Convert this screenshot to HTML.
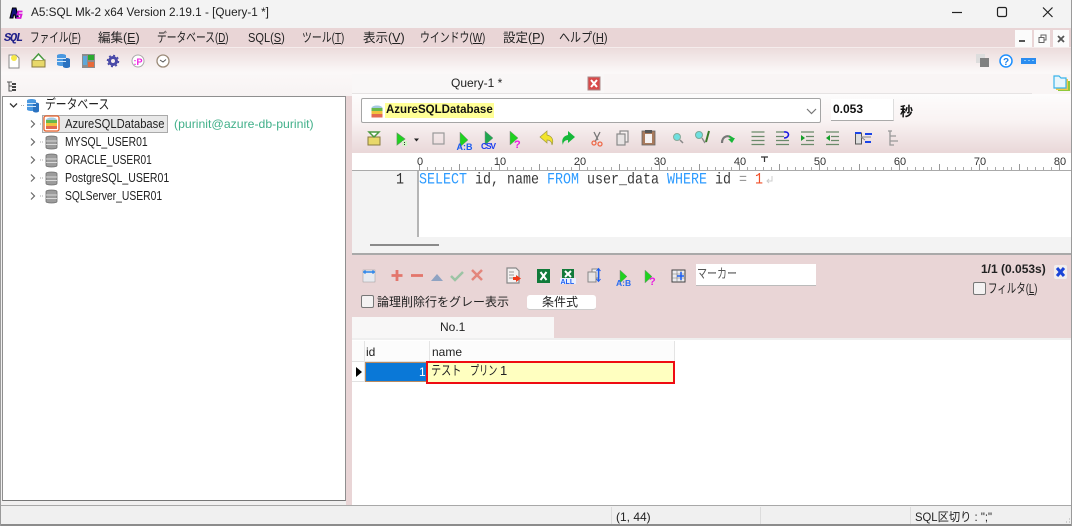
<!DOCTYPE html>
<html lang="ja"><head><meta charset="utf-8"><title>A5:SQL Mk-2</title>
<style>
html,body{margin:0;padding:0}
body{width:1072px;height:526px;overflow:hidden;position:relative;background:#fff;font:12px "Liberation Sans","Noto Sans CJK JP",sans-serif;color:#222}
#w{position:absolute;left:0;top:0;width:1072px;height:526px;overflow:hidden;filter:blur(.3px)}
.a{position:absolute;white-space:nowrap}
.t{position:absolute;white-space:nowrap;line-height:16px;height:16px;transform-origin:0 50%}
u{text-decoration:underline}
svg{position:absolute;left:0;top:0}
.m{font-family:"Liberation Mono",monospace;font-size:13.33px;line-height:18px;transform:scaleY(1.2);transform-origin:0 50%}
.r{font-size:11px;color:#333;transform:translateX(-50%)}
.cb{position:absolute;width:11px;height:11px;border:1px solid #777;border-radius:2px;background:#f4f2f2}
</style></head><body><div id="w">
<!-- backgrounds -->
<div class="a" style="left:0;top:0;width:1072px;height:28px;background:#f3f3f3"></div>
<div class="a" style="left:0;top:28px;width:1072px;height:19px;background:#e9d5d6"></div>
<div class="a" style="left:0;top:47px;width:1072px;height:1px;background:#f5ecec"></div>
<div class="a" style="left:0;top:48px;width:1072px;height:48px;background:linear-gradient(#ecdcdc,#fbf8f8 50%,#f7f3f3)"></div>
<div class="a" style="left:0;top:96px;width:352px;height:410px;background:#f1f0f0"></div>
<div class="a" style="left:346px;top:96px;width:6px;height:409px;background:#e9d5d6"></div>
<div class="a" style="left:2px;top:96px;width:342px;height:403px;background:#fff;border:1px solid #8f8f8f;border-bottom-color:#777"></div>
<div class="a" style="left:352px;top:74px;width:720px;height:20px;background:#f9f5f5"></div>
<div class="a" style="left:352px;top:74px;width:252px;height:20px;background:#f9f7f7"></div>
<div class="a" style="left:352px;top:94px;width:720px;height:59px;background:linear-gradient(#fdfcfc,#f9f3f3 45%,#e9d7d8)"></div>
<div class="a" style="left:352px;top:93px;width:680px;height:1px;background:#e6e3e3"></div>
<!-- combo -->
<div class="a" style="left:361px;top:98px;width:458px;height:23px;background:#fff;border:1px solid #a5a5a5;border-radius:2px"></div>
<div class="a" style="left:831px;top:99px;width:62px;height:21px;background:#fff;border-bottom:1px solid #aaa;border-right:1px solid #ddd"></div>
<!-- ruler + editor -->
<div class="a" style="left:352px;top:153px;width:720px;height:17px;background:#fff"></div>
<div class="a" style="left:352px;top:170px;width:720px;height:1px;background:#aaa"></div>
<div class="a" style="left:419px;top:167px;width:648px;height:3px;background:repeating-linear-gradient(90deg,#aaa 0 1px,transparent 1px 8px)"></div>
<div class="a" style="left:419px;top:164px;width:648px;height:6px;background:repeating-linear-gradient(90deg,#999 0 1px,transparent 1px 40px)"></div>
<div class="a" style="left:352px;top:171px;width:65px;height:67px;background:#f3f3f3"></div>
<div class="a" style="left:417px;top:171px;width:2px;height:67px;background:#b5b5b5"></div>
<div class="a" style="left:352px;top:237px;width:720px;height:16px;background:#f3f3f3"></div>
<div class="a" style="left:370px;top:244px;width:69px;height:2px;background:#8a8a8a"></div>
<div class="a" style="left:352px;top:253px;width:720px;height:2px;background:#a9a9a9"></div>
<!-- results -->
<div class="a" style="left:352px;top:255px;width:720px;height:83px;background:#e9d5d6"></div>
<div class="a" style="left:352px;top:317px;width:202px;height:23px;background:#f8f7f7"></div>
<div class="a" style="left:352px;top:338px;width:720px;height:2px;background:#efefef"></div>
<div class="a" style="left:352px;top:340px;width:720px;height:165px;background:#fff"></div>
<div class="a" style="left:696px;top:264px;width:120px;height:21px;background:#fff;border-bottom:1px solid #bbb"></div>
<div class="a" style="left:527px;top:295px;width:69px;height:14px;background:#fff;border-radius:3px;border-bottom:1px solid #ccc"></div>
<!-- grid -->
<div class="a" style="left:352px;top:341px;width:322px;height:20px;background:#fcfcfc;border-bottom:1px solid #e2e2e2"></div>
<div class="a" style="left:364px;top:341px;width:1px;height:40px;background:#e4e4e4"></div>
<div class="a" style="left:429px;top:341px;width:1px;height:20px;background:#e4e4e4"></div>
<div class="a" style="left:674px;top:341px;width:1px;height:20px;background:#e4e4e4"></div>
<div class="a" style="left:352px;top:381px;width:75px;height:1px;background:#e2e2e2"></div>
<div class="a" style="left:365px;top:362px;width:60px;height:18px;background:#0a78d7;border:1px solid #b98a60"></div>
<div class="a" style="left:426px;top:361px;width:245px;height:19px;background:#ffffc0;border:2px solid #ef0c12"></div>
<!-- status -->
<div class="a" style="left:0;top:505px;width:1072px;height:21px;background:#f0f0f0;border-top:1px solid #a8a8a8;box-sizing:border-box"></div>
<div class="a" style="left:611px;top:507px;width:1px;height:18px;background:#dcdcdc"></div>
<div class="a" style="left:760px;top:507px;width:1px;height:18px;background:#dcdcdc"></div>
<div class="a" style="left:910px;top:507px;width:1px;height:18px;background:#dcdcdc"></div>
<div class="a" style="left:0;top:524px;width:1072px;height:2px;background:#8c8c8c"></div>
<div class="a" style="left:0;top:0;width:1px;height:526px;background:#9a9a9a"></div>
<div class="a" style="left:1071px;top:0;width:1px;height:526px;background:#9a9a9a"></div>
<!-- mdi buttons -->
<div class="a" style="left:1015px;top:30px;width:17px;height:17px;background:#fbfbfb"></div>
<div class="a" style="left:1034px;top:30px;width:16px;height:17px;background:#fbfbfb"></div>
<div class="a" style="left:1053px;top:30px;width:16px;height:17px;background:#fbfbfb"></div>

<svg width="1072" height="526" viewBox="0 0 1072 526" fill="none">
<!-- app logo -->
<path d="M10 18 L12.500 8 H16 L18.500 18 H15.500 L15 15 H13.500 L13 18 Z" fill="#12127a" stroke="#000" stroke-width="1"/>
<path d="M22.500 11.500h-4l-1 3h4l-1 3.500h-4" stroke="#d81ad8" stroke-width="1.800"/>
<!-- window controls -->
<path d="M952 12.500h10" stroke="#222" stroke-width="1.200"/>
<rect x="997.500" y="7.500" width="9" height="9" rx="1.500" stroke="#222" stroke-width="1.200"/>
<path d="M1043 7.500l9.500 9.500M1052.500 7.500l-9.500 9.500" stroke="#222" stroke-width="1.200"/>
<path d="M1019 41h6" stroke="#555" stroke-width="2"/>
<path d="M1039 37.500h5v5h-5zM1041 37v-2h5v5h-2" stroke="#666"/>
<path d="M1058 36l6 6M1064 36l-6 6" stroke="#555" stroke-width="1.800"/>
<!-- top toolbar -->
<path d="M9 55h7l3 3v10H9z" fill="#fff" stroke="#888"/><circle cx="14" cy="58" r="3" fill="#f6e84a"/>
<path d="M32 60h13v7H32z" fill="#e8d86a" stroke="#897a40"/><path d="M33 60l5.500-6 5.500 6" fill="#fff" stroke="#4a9a40" stroke-width="1.500"/>
<path d="M57 55.500c0-2 9-2 9 0v9c0 2-9 2-9 0z" fill="#4a98e0"/><path d="M63 59.500c0-2 7-2 7 0v7c0 2-7 2-7 0z" fill="#2a72c0"/><path d="M57 58.500h9M57 61.500h9" stroke="#d5e8fa"/>
<rect x="82" y="54" width="13" height="14" fill="#8d8d8d"/><rect x="88" y="55" width="6" height="5" fill="#2caa30"/><rect x="88" y="62" width="6" height="5" fill="#e86a3a"/><rect x="83" y="56" width="4" height="9" fill="#5fa8d8"/>
<circle cx="113" cy="61" r="3.500" stroke="#4a4aa8" stroke-width="3"/><circle cx="113" cy="61" r="5.500" stroke="#4a4aa8" stroke-dasharray="2 2.300" stroke-width="1.500"/>
<circle cx="138" cy="61" r="6" fill="#fff" stroke="#aaa"/><text x="133.500" y="65" font-family="Liberation Sans" font-size="9" font-weight="700" fill="#ee1ee0">:P</text>
<circle cx="163" cy="61" r="6" fill="#fff" stroke="#9a8a78" stroke-width="1.300"/><path d="M160 60l3 2 3-2.500" stroke="#555"/>
<path d="M7 82h5M9 82v9h3M9 86h3" stroke="#555"/><rect x="12" y="83" width="4" height="2" fill="#444"/><rect x="12" y="86" width="4" height="2" fill="#444"/><rect x="12" y="89" width="4" height="2" fill="#444"/>
<!-- right tools -->
<rect x="976" y="54" width="9" height="9" fill="#ddd"/><rect x="980" y="58" width="9" height="9" fill="#808080"/>
<circle cx="1006" cy="61" r="6" fill="#fff" stroke="#1e90ff" stroke-width="1.500"/><text x="1003" y="65" font-family="Liberation Sans" font-size="10" font-weight="700" fill="#1e80e8">?</text>
<rect x="1021" y="58" width="15" height="6" fill="#2a8cf0"/><path d="M1025 60v1M1029 60v1M1033 60v1" stroke="#dff" stroke-width="1"/>
<path d="M1058 81h12v10h-12z" fill="#8fc83a"/><path d="M1056 79h12v11h-12z" fill="#f2c94a"/><path d="M1054 76h5l2 2h5v10h-12z" fill="#e8f6fc" stroke="#3ab4ea" stroke-width="1.200"/>
<!-- tree -->
<path d="M10 103.500l3.500 3.500 3.500-3.500" stroke="#333" stroke-width="1.300"/>
<path d="M21 105.500h4" stroke="#aaa" stroke-dasharray="1 1"/>
<path d="M27 100.500c0-2 9-2 9 0v9c0 2-9 2-9 0z" fill="#4a98e0"/><path d="M33 104c0-2 6-2 6 0v7c0 2-6 2-6 0z" fill="#2a72c0"/><path d="M27 103.500h9M27 106.500h9" stroke="#d5e8fa"/>
<rect x="42.500" y="115.500" width="125" height="17" fill="#e8e8e8" stroke="#aaa"/>
<g stroke="#666" stroke-width="1.200"><path d="M31 120.500l3.500 3.500-3.500 3.500M31 138.500l3.500 3.500-3.500 3.500M31 156.500l3.500 3.500-3.500 3.500M31 174.500l3.500 3.500-3.500 3.500M31 192.500l3.500 3.500-3.500 3.500"/></g>
<path d="M40 124h3M40 142h4M40 160h4M40 178h4M40 196h4" stroke="#aaa" stroke-dasharray="1 1"/>
<rect x="44" y="116" width="15" height="15" rx="2" fill="#fff" stroke="#e9602a" stroke-width="1.300"/>
<ellipse cx="51.500" cy="120" rx="5.500" ry="2.500" fill="#a3c9e0"/><rect x="46" y="120" width="11" height="3" fill="#69b84a"/><rect x="46" y="123" width="11" height="3" fill="#f1c23d"/><rect x="46" y="126" width="11" height="3" fill="#e36a50"/>
<g fill="#9c9c9c" stroke="#6a6a6a" stroke-width=".8"><path d="M46 137.500c0-2 11-2 11 0v10c0 2-11 2-11 0z"/><path d="M46 155.500c0-2 11-2 11 0v10c0 2-11 2-11 0z"/><path d="M46 173.500c0-2 11-2 11 0v10c0 2-11 2-11 0z"/><path d="M46 191.500c0-2 11-2 11 0v10c0 2-11 2-11 0z"/></g>
<path d="M46 141h11M46 144.500h11M46 159h11M46 162.500h11M46 177h11M46 180.500h11M46 195h11M46 198.500h11" stroke="#eee" stroke-width=".8"/>
<!-- tab close -->
<rect x="588" y="77" width="12" height="13" fill="#d84a4a" stroke="#a88"/><path d="M591 80l6 7M597 80l-6 7" stroke="#fff" stroke-width="2"/>
<!-- combo icon/chevron -->
<ellipse cx="377" cy="108" rx="5.500" ry="2.500" fill="#a3c9e0"/><rect x="371.500" y="108" width="11" height="3" fill="#69b84a"/><rect x="371.500" y="111" width="11" height="3" fill="#f1c23d"/><rect x="371.500" y="114" width="11" height="3.500" fill="#e36a50"/>
<path d="M807 109l4.500 4.500 4.500-4.500" stroke="#777" stroke-width="1.200"/>
<!-- editor toolbar -->
<path d="M368 137h12v8h-12z" fill="#e8d86a" stroke="#897a40"/><path d="M369 132h10l-5 5z" fill="#fff" stroke="#4a9a40" stroke-width="1.500"/>
<path d="M397 133l8 6-8 6z" fill="#1fd21f" stroke="#5a9a5a" stroke-width=".7"/><rect x="402" y="141" width="5" height="5" fill="#d4f5c8"/><path d="M404.500 142v1M404.500 144v1" stroke="#333"/>
<path d="M414 138.500h5l-2.500 3z" fill="#222"/>
<rect x="433" y="133" width="11" height="11" stroke="#999" stroke-width="1.200"/>
<path d="M460 132l8 8-8 7z" fill="#1fd21f" stroke="#888" stroke-width=".5"/><text x="456.500" y="150" font-family="Liberation Sans" font-size="9" font-weight="700" fill="#1a5cf0">A:B</text>
<path d="M485 131l8 7-8 7z" fill="#1fa84f" stroke="#888" stroke-width=".5"/><text x="481" y="149" font-family="Liberation Sans" font-size="8.500" font-weight="700" fill="#1a3cf0" textLength="15">CSV</text>
<path d="M510 131l8 7-8 7z" fill="#1fd21f" stroke="#888" stroke-width=".5"/><text x="514" y="148" font-family="Liberation Sans" font-size="11" font-weight="700" fill="#e81ee0">?</text>
<path d="M547 131l-7 6 7 6v-3c3 0 5 2 5 5 2-5 0-9-5-10z" fill="#f2e42a" stroke="#a09a40" stroke-width=".7"/>
<path d="M568 131l7 6-7 6v-3c-3 0-5 2-5 5-2-5 0-9 5-10z" fill="#16b83a"/>
<path d="M600 132l-5 10M594 132l4 8" stroke="#777" stroke-width="1.300"/><circle cx="594" cy="143" r="2" stroke="#ee6a4a" stroke-width="1.300"/><circle cx="600" cy="144" r="2" stroke="#ee6a4a" stroke-width="1.300"/>
<rect x="620" y="131" width="8" height="11" fill="#f6f0f0" stroke="#8a8a8a" stroke-width="1.200"/><rect x="617" y="134" width="8" height="11" fill="#e8e4e4" stroke="#8a8a8a" stroke-width="1.200"/>
<rect x="642" y="131" width="13" height="14" fill="#a97a5c" stroke="#666" stroke-width=".8"/><rect x="645" y="134" width="7" height="9" fill="#f5f1f1"/><rect x="645" y="130" width="7" height="3" fill="#555"/>
<circle cx="677" cy="137" r="3.500" fill="#6fe0e0" stroke="#8a9"/><path d="M680 140l3 3" stroke="#888" stroke-width="1.500"/>
<circle cx="699" cy="135" r="3.500" fill="#6fe0e0" stroke="#7a9"/><path d="M702 138l3 5" stroke="#888" stroke-width="1.400"/><path d="M709 131l-3 11" stroke="#3a7a2a" stroke-width="2"/>
<path d="M722 143c0-7 7-9 10-4" stroke="#777" stroke-width="2.200"/><path d="M735 138l-3 5-4-4z" fill="#18b838"/><path d="M729 136l5 3" stroke="#18b838" stroke-width="1.500"/>
<path d="M751.500 132h13M751.500 136.500h13M751.500 140.500h13M751.500 144.500h13" stroke="#6a8a6a" stroke-width="1.200"/>
<path d="M776 132h8M776 136.500h8M776 140.500h13M776 144.500h13" stroke="#6a8a6a" stroke-width="1.200"/><path d="M784 132c6-1 6 6 0 6" stroke="#1a1ae0" stroke-width="1.600"/>
<path d="M801 132h13M806 136.500h8M806 140.500h8M801 144.500h13" stroke="#6a8a6a" stroke-width="1.200"/><path d="M801 135l4 3-4 3z" fill="#16a02a"/>
<path d="M826 132h13M831 136.500h8M831 140.500h8M826 144.500h13" stroke="#6a8a6a" stroke-width="1.200"/><path d="M830 135l-4 3 4 3z" fill="#16a02a"/>
<rect x="855.500" y="133" width="6" height="11" fill="#ddd" stroke="#555"/><rect x="855" y="132" width="6" height="2" fill="#1a44e8"/><rect x="865" y="133" width="7" height="2" fill="#1a44e8"/><rect x="865" y="141" width="6" height="2" fill="#1a44e8"/><path d="M861 137l4 3M861 137h10" stroke="#888"/>
<path d="M888 131h4M890 131v14h4M890 136h6M890 141h8" stroke="#999" stroke-width="1.300"/>
<!-- return mark -->
<path d="M772 176v5h-5M769 179l-2 2 2 2" stroke="#ccc"/>
<path d="M761 157h7M764.500 157v5" stroke="#333" stroke-width="1.200"/>
<!-- result toolbar -->
<rect x="363" y="270" width="12" height="12" fill="#e8eaef" stroke="#999" stroke-width=".5"/><path d="M363 272h12" stroke="#1a7ae8" stroke-width="1.400"/><path d="M365 270v4M373 270v4" stroke="#1a7ae8"/>
<path d="M397 270v11M391.500 275.500h11" stroke="#e3766c" stroke-width="2.800"/>
<path d="M411 275.500h12" stroke="#e3766c" stroke-width="2.800"/>
<path d="M431 281l6-7 6 7z" fill="#8fa3c2"/>
<path d="M451 276l4 4 8-8" stroke="#9cc4a4" stroke-width="2.500"/>
<path d="M472 270l10 10M482 270l-10 10" stroke="#e3867c" stroke-width="2.500"/>
<path d="M507 268h9l3 3v12h-12z" fill="#f4f1f1" stroke="#888" stroke-width="1.200"/><path d="M509 272h5M509 275h5M509 278h5" stroke="#999"/><path d="M513 277h3v-2l5 3.500-5 3.500v-2h-3z" fill="#f03a1a"/>
<rect x="537" y="269" width="13" height="14" fill="#117a3a"/><path d="M540.500 272l6 8M546.500 272l-6 8" stroke="#fff" stroke-width="2"/>
<rect x="562" y="269" width="12" height="10" fill="#117a3a"/><path d="M565 271l6 6M571 271l-6 6" stroke="#fff" stroke-width="2"/><rect x="560" y="278" width="16" height="6" fill="#e9f0ff"/><text x="560.500" y="284" font-family="Liberation Sans" font-size="7" font-weight="700" fill="#1a5cf0">ALL</text>
<rect x="592" y="269" width="7" height="9" fill="#f2eeee" stroke="#888"/><rect x="588" y="272" width="8" height="10" fill="#e8e4e4" stroke="#888"/><path d="M598.500 269v12" stroke="#1a5cf0" stroke-width="1.500"/><path d="M596.500 271l2-2.500 2 2.500M596.500 279l2 2.500 2-2.500" stroke="#1a5cf0"/>
<path d="M620 270l7 6.500-7 6.500z" fill="#1fd21f" stroke="#888" stroke-width=".5"/><text x="616" y="286" font-family="Liberation Sans" font-size="8.500" font-weight="700" fill="#2a6cf0">A:B</text>
<path d="M645 270l7 6.500-7 6.500z" fill="#1fd21f" stroke="#888" stroke-width=".5"/><text x="649" y="285" font-family="Liberation Sans" font-size="11" font-weight="700" fill="#e81ee0">?</text>
<rect x="672" y="270" width="13" height="12" fill="#ecebef" stroke="#444"/><path d="M672 274h13M672 278h13M677 270v12M681 270v12" stroke="#777" stroke-width=".6"/><path d="M677 276h7M681 272v8" stroke="#1a5cf0" stroke-width="1.500"/>
<!-- filter x -->
<rect x="1054" y="265" width="13" height="14" rx="2" fill="#f2eeee"/><path d="M1057 268l7 8M1064 268l-7 8" stroke="#1a44d8" stroke-width="3"/>
<!-- row marker -->
<path d="M356 367l6 5-6 5z" fill="#000"/>
<!-- grip -->
<path d="M1069 522h1M1066 522h1M1069 519h1" stroke="#aaa"/>
</svg>

<!-- text -->
<div class="t" style="left:31px;top:5px;font-size:11.750px;color:#222">A5:SQL Mk-2 x64 Version 2.19.1 - [Query-1 *]</div>
<div class="t" style="left:4px;top:30px;font-size:12px;font-weight:700;font-style:italic;font-family:'Liberation Mono',monospace;color:#22228a;letter-spacing:-1.200px">SQL</div>
<div class="t" style="left:30px;top:30px;font-size:13px;transform:scaleX(.74)">ファイル(<u>F</u>)</div>
<div class="t" style="left:98px;top:30px;font-size:12.500px">編集(<u>E</u>)</div>
<div class="t" style="left:157px;top:30px;font-size:13px;transform:scaleX(.75)">データベース(<u>D</u>)</div>
<div class="t" style="left:248px;top:30px;font-size:13px;transform:scaleX(.85)">SQL(<u>S</u>)</div>
<div class="t" style="left:302px;top:30px;font-size:13px;transform:scaleX(.76)">ツール(<u>T</u>)</div>
<div class="t" style="left:363px;top:30px;font-size:12.500px">表示(<u>V</u>)</div>
<div class="t" style="left:420px;top:30px;font-size:13px;transform:scaleX(.76)">ウインドウ(<u>W</u>)</div>
<div class="t" style="left:503px;top:30px;font-size:12.500px">設定(<u>P</u>)</div>
<div class="t" style="left:559px;top:30px;font-size:13px;transform:scaleX(.85)">ヘルプ(<u>H</u>)</div>

<div class="t" style="left:45px;top:97px;font-size:13.500px;transform:scaleX(.80)">データベース</div>
<div class="t" style="left:65px;top:116px;font-size:13px;transform:scaleX(.86)">AzureSQLDatabase</div>
<div class="t" style="left:174px;top:116px;color:#42b08a;transform:scaleX(1.02)">(purinit@azure-db-purinit)</div>
<div class="t" style="left:65px;top:134px;font-size:13px;transform:scaleX(.80)">MYSQL_USER01</div>
<div class="t" style="left:65px;top:152px;font-size:13px;transform:scaleX(.78)">ORACLE_USER01</div>
<div class="t" style="left:65px;top:170px;font-size:13px;transform:scaleX(.81)">PostgreSQL_USER01</div>
<div class="t" style="left:65px;top:188px;font-size:13px;transform:scaleX(.795)">SQLServer_USER01</div>

<div class="t" style="left:451px;top:75px">Query-1 *</div>
<div class="t" style="left:385px;top:103px;height:15px;line-height:15px;background:#ffff96;font-weight:700;font-size:11.500px;color:#111;padding:0 1px">AzureSQLDatabase</div>
<div class="t" style="left:833px;top:101px;font-weight:700;color:#111">0.053</div>
<div class="t" style="left:900px;top:104px;font-weight:700;color:#111;font-size:13px">秒</div>

<div class="t r" style="left:420px;top:154px">0</div>
<div class="t r" style="left:500px;top:154px">10</div>
<div class="t r" style="left:580px;top:154px">20</div>
<div class="t r" style="left:660px;top:154px">30</div>
<div class="t r" style="left:740px;top:154px">40</div>
<div class="t r" style="left:820px;top:154px">50</div>
<div class="t r" style="left:900px;top:154px">60</div>
<div class="t r" style="left:980px;top:154px">70</div>
<div class="t r" style="left:1060px;top:154px">80</div>

<div class="t m" style="left:396px;top:172px;height:18px;color:#333">1</div>
<div class="t m" style="left:419px;top:172px;height:18px;color:#3a3a3a"><span style="color:#2d9bff">SELECT</span> id, name <span style="color:#2d9bff">FROM</span> user_data <span style="color:#2d9bff">WHERE</span> id <span style="color:#999">=</span> <span style="color:#f0502a">1</span></div>

<div class="t" style="left:697px;top:266px;color:#555;font-size:13px;transform:scaleX(.77)">マーカー</div>
<div class="t" style="left:981px;top:261px;font-weight:700;font-size:12px;color:#222">1/1 (0.053s)</div>
<div class="cb" style="left:973px;top:282px"></div>
<div class="t" style="left:988px;top:281px;font-size:13px;transform:scaleX(.73)">フィルタ(<u>L</u>)</div>
<div class="cb" style="left:361px;top:295px"></div>
<div class="t" style="left:377px;top:294px">論理削除行をグレー表示</div>
<div class="t" style="left:542px;top:294px">条件式</div>
<div class="t" style="left:440px;top:319px">No.1</div>
<div class="t" style="left:366px;top:344px">id</div>
<div class="t" style="left:432px;top:344px">name</div>
<div class="t" style="left:419px;top:364px;color:#fff">1</div>
<div class="t" style="left:431px;top:363px;color:#222;font-size:13px;transform:scaleX(.78)">テスト</div>
<div class="t" style="left:470px;top:363px;color:#222;font-size:13px;transform:scaleX(.70)">プリン</div>
<div class="t" style="left:500px;top:363px;color:#222;font-size:13px">1</div>
<div class="t" style="left:616px;top:509px">(1, 44)</div>
<div class="t" style="left:915px;top:509px;transform:scaleX(.94)">SQL区切り : ";"</div>
</div></body></html>
